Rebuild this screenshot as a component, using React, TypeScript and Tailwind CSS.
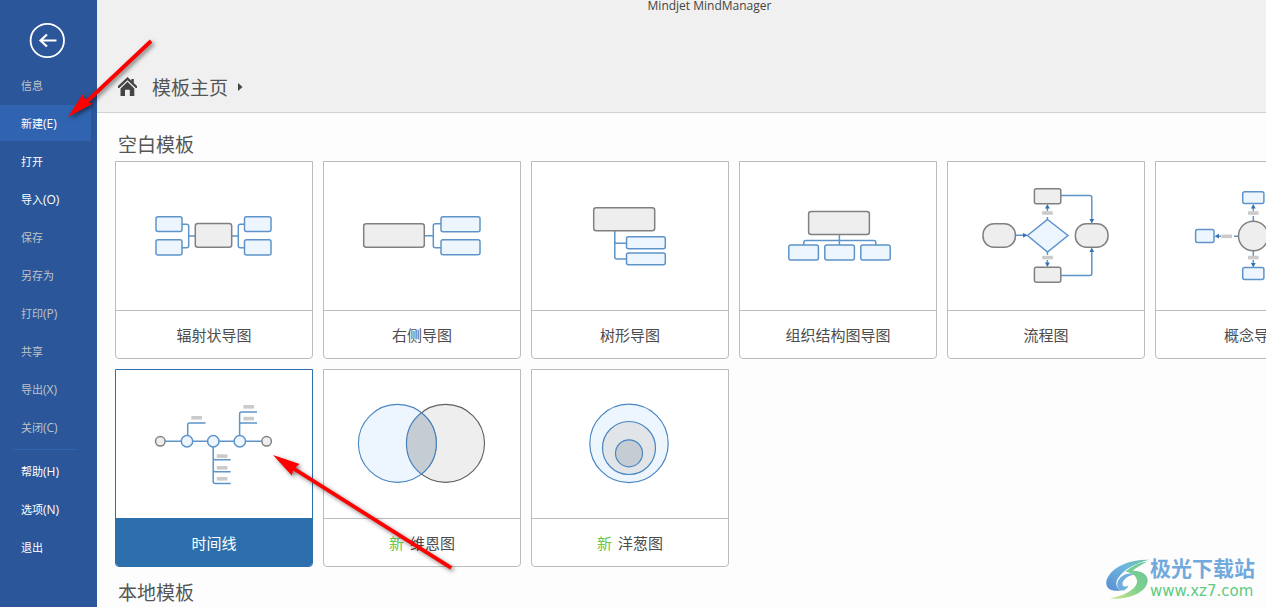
import type { ReactNode } from "react"

interface NavItem {
  label: string
  shortcut?: string
  muted?: boolean
  active?: boolean
}

const mainNav: NavItem[] = [
  { label: "信息", muted: true },
  { label: "新建", shortcut: "(E)", active: true },
  { label: "打开" },
  { label: "导入", shortcut: "(O)" },
  { label: "保存", muted: true },
  { label: "另存为", muted: true },
  { label: "打印", shortcut: "(P)", muted: true },
  { label: "共享", muted: true },
  { label: "导出", shortcut: "(X)", muted: true },
  { label: "关闭", shortcut: "(C)", muted: true },
]

const footerNav: NavItem[] = [
  { label: "帮助", shortcut: "(H)" },
  { label: "选项", shortcut: "(N)" },
  { label: "退出" },
]

// Shared shape styles for the template drawings
const blue = { fill: "#edf5fe", stroke: "#5e94c9", strokeWidth: 1.5 }
const gray = { fill: "#eeeeee", stroke: "#808080", strokeWidth: 1.5 }
const line = { fill: "none", stroke: "#5e94c9", strokeWidth: 1.5 }

function Box({ x, y, w, h, tone = blue, r = 2 }: { x: number; y: number; w: number; h: number; tone?: typeof blue; r?: number }) {
  return <rect x={x} y={y} width={w} height={h} rx={r} {...tone} />
}

function Tag({ x, y }: { x: number; y: number }) {
  return <rect x={x} y={y} width="10.6" height="3.6" fill="#cbcbcb" />
}

function Drawing({ children }: { children: ReactNode }) {
  return (
    <svg viewBox="0 0 196 148" className="block h-[148px] w-full" aria-hidden="true">
      {children}
    </svg>
  )
}

function RadialMap() {
  return (
    <Drawing>
      <path d="M66 62.3h4.7q2 0 2 2v19.4q0 2-2 2H66M72.7 74h6.5M128.5 62.3h-4.2q-2 0-2 2v19.4q0 2 2 2h4.2M122.3 74H116" {...line} />
      <Box x={40} y={54.7} w={26} h={14.7} />
      <Box x={40} y={77.7} w={26} h={15.2} />
      <Box x={128.5} y={54.7} w={26.5} h={14.7} />
      <Box x={128.5} y={77.7} w={26.5} h={15.2} />
      <Box x={79.3} y={61.6} w={36.4} h={23.7} tone={gray} r={2.5} />
    </Drawing>
  )
}

function RightMap() {
  return (
    <Drawing>
      <path d="M117 61.8h-5.7q-2 0-2 2v20q0 2 2 2h5.7M109.3 73.8H101" {...line} />
      <Box x={39.7} y={61.7} w={60.6} h={23.6} tone={gray} r={2.5} />
      <Box x={117} y={54.7} w={39} h={15} />
      <Box x={117} y={77.7} w={39} h={15} />
    </Drawing>
  )
}

function TreeMap() {
  return (
    <Drawing>
      <path d="M82.8 69v26q0 2 2 2H94M82.8 79.3q0 2 2 2H94" {...line} />
      <Box x={61.7} y={45.7} w={61} h={23} tone={gray} r={2.5} />
      <Box x={94.5} y={74.7} w={38.8} h={12} />
      <Box x={94.5} y={91} w={38.8} h={11.8} />
    </Drawing>
  )
}

function OrgChart() {
  return (
    <Drawing>
      <path d="M99.4 73v10M63.8 83v-2.5q0-2 2-2h68q2 0 2 2V83" {...line} />
      <Box x={68.6} y={49.4} w={60.8} h={23.2} tone={gray} r={2.5} />
      <Box x={48.8} y={83} w={29.6} h={15} />
      <Box x={84.8} y={83} w={29.6} h={15} />
      <Box x={120.8} y={83} w={29.4} h={15} />
    </Drawing>
  )
}

function FlowChart() {
  return (
    <Drawing>
      <path d="M68 73.3h9M99.4 58v-3M99.4 49v-5M99.4 90v3M99.4 98v4M113 33.4h28.8q2 0 2 2V59M113 113.6h28.8q2 0 2-2V88" {...line} />
      <g fill="#3672b4">
        <path d="M75 71l5 2.3-5 2.3zM97 46.5l2.4-4.5 2.4 4.5zM97 100.5l2.4 4.5 2.4-4.5zM141.4 57l2.4 4.5 2.4-4.5zM141.4 90l2.4-4.5 2.4 4.5z" />
      </g>
      <Tag x={94.2} y={49.2} />
      <Tag x={94.2} y={93.8} />
      <path d="M99.5 57.5L120 73.5 99.5 90 79.5 73.5z" {...blue} />
      <Box x={86.4} y={26.7} w={26.4} h={15} tone={gray} />
      <Box x={86.4} y={105.2} w={26.4} h={15} tone={gray} />
      <Box x={35} y={61.7} w={32.4} h={23.6} tone={gray} r={11} />
      <Box x={127.4} y={61.7} w={32.6} h={23.6} tone={gray} r={11} />
    </Drawing>
  )
}

function ConceptMap() {
  return (
    <Drawing>
      <path d="M97.3 44v5M97.3 54v5M97.3 89v5M97.3 98v5M61 74.2h4M78 74.2h5M112 74.2h5M130 74.2h4" {...line} />
      <g fill="#3672b4">
        <path d="M94.9 46.5l2.4-4.5 2.4 4.5zM94.9 101l2.4 4.5 2.4-4.5zM63 71.8l-4.5 2.4 4.5 2.4zM132 71.8l4.5 2.4-4.5 2.4z" />
      </g>
      <Tag x={92} y={49.2} />
      <Tag x={92} y={93.8} />
      <Tag x={65.4} y={72.5} />
      <Tag x={119} y={72.5} />
      <Box x={86.7} y={29.7} w={21.2} h={11.8} />
      <Box x={86.7} y={105.5} w={21.2} h={12} />
      <Box x={39.6} y={67.6} w={18.4} h={12.8} />
      <Box x={136.6} y={67.6} w={18.4} h={12.8} />
      <circle cx="97.3" cy="74" r="14.8" {...gray} />
    </Drawing>
  )
}

function Timeline() {
  return (
    <Drawing>
      <path d="M44 71.3h107M71.7 71V55q0-2 2-2h15.8M123.6 71V44q0-2 2-2H141M123.6 55q0-2 2-2H141" {...line} />
      <path d="M97.2 71v40.5q0 2 2 2h15.5M97.2 87.7q0 2 2 2h15.5M97.2 99.7q0 2 2 2h15.5" {...line} />
      <Tag x={75.4} y={46} />
      <Tag x={127.4} y={35} />
      <Tag x={127.4} y={46.8} />
      <Tag x={100.8} y={84.3} />
      <Tag x={100.8} y={96} />
      <Tag x={100.8} y={107} />
      <circle cx="44.3" cy="71.3" r="4.8" {...gray} />
      <circle cx="71" cy="71.3" r="5.7" {...blue} />
      <circle cx="97.3" cy="71.3" r="5.7" {...blue} />
      <circle cx="123.8" cy="71.3" r="5.7" {...blue} />
      <circle cx="150.6" cy="71.3" r="4.8" {...gray} />
    </Drawing>
  )
}

function Venn() {
  return (
    <Drawing>
      <circle cx="121.5" cy="73.4" r="39" fill="#eeeeee" stroke="#5f5f5f" strokeWidth="1.1" />
      <circle cx="73.4" cy="73.4" r="39" fill="#edf5fe" stroke="#4a86c2" strokeWidth="1.1" />
      <path d="M97.4 42.7A39 39 0 0 1 97.4 104.1A39 39 0 0 1 97.4 42.7z" fill="#c6ccd3" stroke="#4a80b8" strokeWidth="1.2" />
    </Drawing>
  )
}

function Onion() {
  return (
    <Drawing>
      <circle cx="97" cy="73.4" r="39.2" fill="#edf5fe" stroke="#4a86c2" strokeWidth="1.2" />
      <circle cx="97" cy="78" r="26.5" fill="#e1e5e8" stroke="#4a86c2" strokeWidth="1.2" />
      <circle cx="97" cy="83.3" r="13.5" fill="#c6ccd3" stroke="#4a86c2" strokeWidth="1.2" />
    </Drawing>
  )
}

const templates = [
  { name: "辐射状导图", drawing: <RadialMap /> },
  { name: "右侧导图", drawing: <RightMap /> },
  { name: "树形导图", drawing: <TreeMap /> },
  { name: "组织结构图导图", drawing: <OrgChart /> },
  { name: "流程图", drawing: <FlowChart /> },
  { name: "概念导图", drawing: <ConceptMap /> },
  { name: "时间线", drawing: <Timeline />, selected: true },
  { name: "维恩图", drawing: <Venn />, isNew: true },
  { name: "洋葱图", drawing: <Onion />, isNew: true },
]

function NavButton({ label, shortcut, muted, active }: NavItem) {
  return (
    <button
      type="button"
      aria-current={active ? "page" : undefined}
      className={`mr-1.5 flex h-9 items-center pt-0.5 pl-[21px] text-left text-[11px] ${
        active ? "bg-[#3064b0]" : ""
      } ${muted ? "text-[#bfc3c8]" : "text-white"}`}
    >
      {label}
      {shortcut && <span className="text-xs">{shortcut}</span>}
    </button>
  )
}

function Sidebar() {
  return (
    <aside className="flex w-[97px] shrink-0 flex-col bg-[#2b579a]">
      <button type="button" aria-label="返回" className="mt-[22px] mb-2 ml-[29px] h-[37px] w-[37px]">
        <svg viewBox="0 0 37 37" className="h-full w-full" fill="none" stroke="#fff">
          <circle cx="18.3" cy="18.5" r="16.7" strokeWidth="1.8" />
          <path d="M27.5 18.5H11.5M18 12.5l-6.500 6 6.500 6" strokeWidth="2.2" />
        </svg>
      </button>
      <nav className="flex flex-col gap-0.5">
        {mainNav.map((item) => (
          <NavButton key={item.label} {...item} />
        ))}
        <hr className="mt-0.5 mr-5 mb-px ml-[14px] border-[#3064b0]" />
        {footerNav.map((item) => (
          <NavButton key={item.label} {...item} />
        ))}
      </nav>
    </aside>
  )
}

function Header() {
  return (
    <header className="flex h-[113px] shrink-0 flex-col justify-between border-b border-[#d2d2d2] bg-[#f0f0f0]">
      <p className="pl-14 text-center text-xs leading-3 text-[#444]">Mindjet MindManager</p>
      <nav className="flex h-[50px] items-center pl-[21px]">
        <svg viewBox="0 0 20 20" className="mr-3.5 h-5 w-5" fill="#444" aria-hidden="true">
          <path d="M9.5 0L0 8.9v2.2h1.200L9.5 3.3l8.3 7.8h1.2V8.9L15.8 5.9V2h-2.4v1.7z" />
          <path d="M9.5 4.8L2.5 11.4V19H7v-6.2h4.8V19h4.5v-7.6z" />
        </svg>
        <a href="#" className="pt-0.5 text-[19px] leading-7 text-[#555]">
          模板主页
        </a>
        <svg viewBox="0 0 5 8" className="ml-2.5 h-2 w-[5px]" fill="#444" aria-hidden="true">
          <path d="M0 0l4.5 4L0 8z" />
        </svg>
      </nav>
    </header>
  )
}

function TemplateCard({ name, drawing, selected, isNew }: { name: string; drawing: ReactNode; selected?: boolean; isNew?: boolean }) {
  return (
    <button
      type="button"
      aria-pressed={!!selected}
      className={`overflow-hidden rounded-b-[4px] border bg-white text-[15px] ${
        selected ? "border-[#2d6fac]" : "border-[#bcbcbc]"
      }`}
    >
      {drawing}
      <span
        className={`flex h-12 items-center justify-center gap-1.5 border-t pt-0.5 ${
          selected ? "border-[#2d6fac] bg-[#2d6fac] text-white" : "border-[#bcbcbc] text-[#4c4c4c]"
        }`}
      >
        {isNew && <span className="text-[#6cc644]">新</span>}
        {name}
      </span>
    </button>
  )
}

function SectionTitle({ children }: { children: ReactNode }) {
  return <h2 className="mb-0.5 pl-[3px] text-[19px] leading-7 text-[#555]">{children}</h2>
}

// Red pointer arrows drawn on top of the window
function Pointers() {
  return (
    <svg className="pointer-events-none absolute top-0 left-0 h-[600px] w-[480px]" viewBox="0 0 480 600" aria-hidden="true">
      <g fill="#f00" className="drop-shadow-[2px_2px_2px_rgba(0,0,0,0.5)]">
        <path d="M68 117L82.500 94.500l3 5.500L149.800 39.600l2.600 2.800L88.500 102.800l4.500.700z" />
        <path d="M273 455L299.500 464l-4 3.600L452.200 566.200l-2 3.200L293.200 470.600l-1.400 4.900z" />
      </g>
    </svg>
  )
}

function SiteMark() {
  return (
    <div className="pointer-events-none absolute right-[11px] bottom-[7px] flex items-center">
      <svg viewBox="50 36 132 122" className="h-[41px] w-11" aria-hidden="true">
        <defs>
          <linearGradient id="markTop" x1="0" y1="1" x2="1" y2="0">
            <stop offset="0" stopColor="#5b8fd0" />
            <stop offset="0.6" stopColor="#6db5e0" />
            <stop offset="1" stopColor="#6fc39a" />
          </linearGradient>
          <linearGradient id="markBottom" x1="0" y1="1" x2="1" y2="0">
            <stop offset="0" stopColor="#d5e58a" />
            <stop offset="0.5" stopColor="#7fd08c" />
            <stop offset="1" stopColor="#6bc6a0" />
          </linearGradient>
        </defs>
        <path d="M180 38C125 36 78 56 58 86C40 114 56 136 96 130C78 122 76 104 90 88C106 66 140 48 180 38z" fill="url(#markTop)" />
        <path d="M96 130C78 124 80 98 100 86C112 78 128 77 138 82C118 84 104 94 100 106C97 118 106 122 118 115C112 126 106 131 96 130z" fill="#70aee0" />
        <path d="M108 74C130 54 152 46 174 43C154 54 140 62 130 71C154 70 177 82 175 102C170 136 120 158 60 154C104 146 138 128 143 106C145 90 132 78 108 74z" fill="url(#markBottom)" />
      </svg>
      <div className="flex flex-col">
        <span className="mb-1 text-[21px] leading-5 font-bold text-[#72a9dc]">极光下载站</span>
        <span className="font-['DejaVu_Sans'] text-[15px] leading-[18px] text-[#5fca83]">www.xz7.com</span>
      </div>
    </div>
  )
}

export default function App() {
  return (
    <div className="relative flex h-screen overflow-hidden bg-[#fdfdfd] font-['Open_Sans','Noto_Sans_CJK_SC',sans-serif]">
      <Sidebar />
      <div className="flex min-w-0 flex-1 flex-col">
        <Header />
        <main className="overflow-hidden pt-1.5 pl-[18px]">
          <section className="pt-3">
            <SectionTitle>空白模板</SectionTitle>
            <div className="grid grid-cols-[repeat(6,198px)] gap-2.5">
              {templates.map((template) => (
                <TemplateCard key={template.name} {...template} />
              ))}
            </div>
          </section>
          <section className="pt-3">
            <SectionTitle>本地模板</SectionTitle>
          </section>
        </main>
      </div>
      <Pointers />
      <SiteMark />
    </div>
  )
}
